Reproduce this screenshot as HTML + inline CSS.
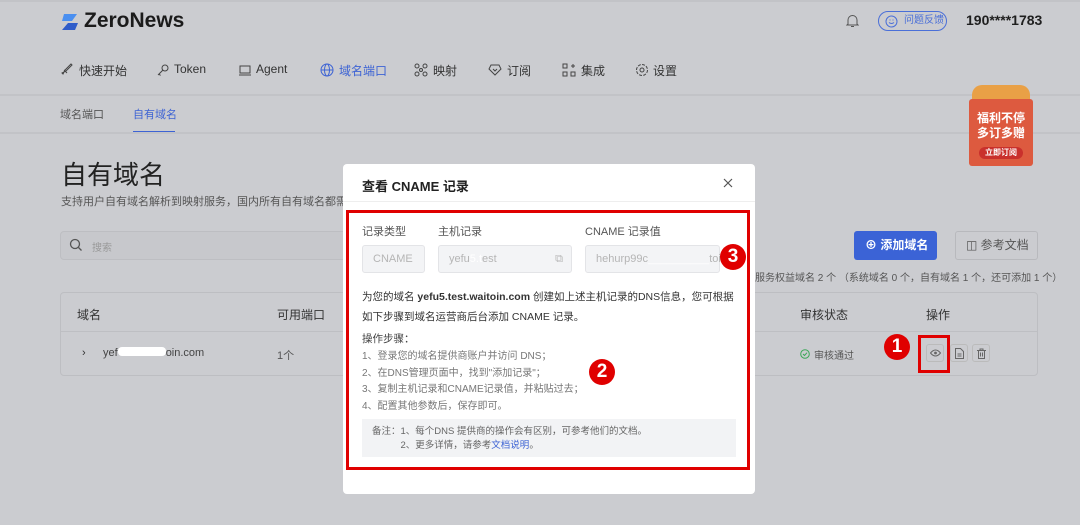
<!DOCTYPE html>
<html><head><meta charset="utf-8"><style>
*{margin:0;padding:0;box-sizing:border-box}
body{width:1080px;height:525px;overflow:hidden;background:#cbccd0;font-family:"Liberation Sans","Noto Sans CJK SC",sans-serif;position:relative;color:#1f1f1f}
.a{position:absolute;white-space:nowrap}
.hr{position:absolute;left:0;width:1080px;height:2px;background:#c2c3c7}
.in{position:absolute;background:#c7c8cc;border:1px solid #bdbec2;border-radius:4px}
.modal{position:absolute;left:343px;top:164px;width:412px;height:330px;background:#fff;border-radius:4px}
.box{position:absolute;background:#f3f4f6;border:1px solid #e3e4e7;border-radius:3px;color:#b5b5b5;font-size:11px;padding-left:10px;line-height:26px}
.num{position:absolute;width:26px;height:26px;border-radius:50%;background:#e00000;color:#fff;font-size:19px;font-weight:bold;text-align:center;line-height:26px}
.st{font-size:10px;color:#777}
.nav{position:absolute;top:62px;font-size:12px;color:#333}
.nav svg{position:absolute;left:0;top:1px}
</style></head><body>
<div class="hr" style="top:0;height:2px"></div>
<svg class="a" style="left:60px;top:12px" width="20" height="20" viewBox="0 0 20 20"><path d="M4 2h13l-5 7H2z" fill="#4a8ff0"/><path d="M8 11h10l-3 7H2z" fill="#2f5cc9"/></svg>
<div class="a" style="left:84px;top:9px;font-size:21px;font-weight:bold;color:#1b1b1b">ZeroNews</div>
<svg class="a" style="left:846px;top:14px" width="13" height="14" viewBox="0 0 13 14"><path d="M2 10V6a4.5 4.5 0 019 0v4l1 1H1zM5 12.5h3" stroke="#555" fill="none"/></svg>
<div class="a" style="left:878px;top:11px;width:69px;height:20px;border:1px solid #4a6fd8;border-radius:10px;color:#4a6fd8;font-size:10px;line-height:18px;padding-left:25px">问题反馈<svg style="position:absolute;left:6px;top:3px" width="13" height="13" viewBox="0 0 13 13"><circle cx="6.5" cy="6.5" r="5.5" stroke="#4a6fd8" fill="none"/><path d="M4 7.5q2.5 2 5 0M4.5 5h1M7.5 5h1" stroke="#4a6fd8" fill="none"/></svg></div>
<div class="a" style="left:966px;top:12px;font-size:14px;font-weight:bold">190****1783</div>

<div class="nav" style="left:60px;padding-left:19px"><svg width="14" height="14" viewBox="0 0 14 14"><path d="M3 11l2-4 6-6 1 1-6 6-4 2zM4 7l3 3" stroke="#444" fill="none"/></svg>快速开始</div>
<div class="nav" style="left:156px;padding-left:18px"><svg width="14" height="14" viewBox="0 0 14 14"><circle cx="9" cy="5" r="3" stroke="#444" fill="none"/><path d="M7 7l-5 5M3 11l1.5 1.5" stroke="#444" fill="none"/></svg>Token</div>
<div class="nav" style="left:238px;padding-left:18px"><svg width="14" height="14" viewBox="0 0 14 14"><rect x="2" y="3" width="10" height="7" stroke="#444" fill="none"/><path d="M1 12h12" stroke="#444"/></svg>Agent</div>
<div class="nav" style="left:320px;padding-left:19px;color:#3d63d4"><svg width="14" height="14" viewBox="0 0 14 14"><circle cx="7" cy="7" r="6" stroke="#3d63d4" fill="none"/><ellipse cx="7" cy="7" rx="2.5" ry="6" stroke="#3d63d4" fill="none"/><path d="M1 7h12" stroke="#3d63d4"/></svg>域名端口</div>
<div class="nav" style="left:414px;padding-left:19px"><svg width="14" height="14" viewBox="0 0 14 14"><g stroke="#444" fill="none"><circle cx="3" cy="3" r="2"/><circle cx="11" cy="3" r="2"/><circle cx="3" cy="11" r="2"/><circle cx="11" cy="11" r="2"/><circle cx="7" cy="7" r="1.5"/></g></svg>映射</div>
<div class="nav" style="left:488px;padding-left:19px"><svg width="14" height="14" viewBox="0 0 14 14"><path d="M3 2h8l2 4-6 6-6-6z M5 6l2 2 2-2" stroke="#444" fill="none"/></svg>订阅</div>
<div class="nav" style="left:562px;padding-left:19px"><svg width="14" height="14" viewBox="0 0 14 14"><g stroke="#444" fill="none"><rect x="1" y="1" width="4" height="4"/><rect x="1" y="9" width="4" height="4"/><rect x="9" y="9" width="4" height="4"/><path d="M11 1v4M9 3h4"/></g></svg>集成</div>
<div class="nav" style="left:635px;padding-left:18px"><svg width="14" height="14" viewBox="0 0 14 14"><circle cx="7" cy="7" r="5.5" stroke="#444" fill="none" stroke-dasharray="3 1.3"/><circle cx="7" cy="7" r="2" stroke="#444" fill="none"/></svg>设置</div>

<div class="hr" style="top:94px"></div>
<div class="a" style="left:60px;top:106px;font-size:11px;color:#555">域名端口</div>
<div class="a" style="left:133px;top:106px;font-size:11px;color:#3d63d4">自有域名</div>
<div class="a" style="left:133px;top:131px;width:42px;height:2px;background:#3d63d4"></div>
<div class="hr" style="top:132px"></div>
<div class="a" style="left:965px;top:85px;width:72px;height:82px;">
<div style="position:absolute;left:7px;top:0;width:58px;height:22px;background:#e9a046;border-radius:10px 10px 0 0"></div>
<div style="position:absolute;left:4px;top:14px;width:64px;height:67px;background:#dd5a3f;border-radius:3px;color:#fff;text-align:center;font-weight:bold;font-size:12px;line-height:15px;padding-top:12px">福利不停<br>多订多赠<div style="margin:6px auto 0;width:44px;height:12px;background:#c9302c;border-radius:6px;font-size:8px;line-height:12px">立即订阅</div></div>
</div>
<div class="a" style="left:61px;top:155px;font-size:26px;color:#222">自有域名</div>
<div class="a" style="left:61px;top:193px;font-size:11px;color:#555">支持用户自有域名解析到映射服务，国内所有自有域名都需</div>
<div class="in" style="left:60px;top:231px;width:300px;height:29px"></div>
<svg class="a" style="left:69px;top:238px" width="14" height="14" viewBox="0 0 14 14"><circle cx="6" cy="6" r="4.5" stroke="#555" fill="none" stroke-width="1.3"/><path d="M9.5 9.5l3 3" stroke="#555" stroke-width="1.3"/></svg>
<div class="a" style="left:92px;top:239px;font-size:10px;color:#999">搜索</div>
<div class="a" style="left:854px;top:231px;width:83px;height:29px;background:#3b63d6;border-radius:3px;color:#fff;font-size:12px;font-weight:bold;line-height:29px;padding-left:11px">⊕ 添加域名</div>
<div class="a" style="left:955px;top:231px;width:83px;height:29px;border:1px solid #b8b9bd;border-radius:3px;color:#555;font-size:12px;line-height:27px;padding-left:10px">◫ 参考文档</div>
<div class="a" style="left:755px;top:269px;font-size:10px;color:#555">服务权益域名 2 个 （系统域名 0 个，自有域名 1 个，还可添加 1 个）</div>
<div class="in" style="left:60px;top:292px;width:978px;height:84px;background:#cbccd0"></div>
<div class="a" style="left:61px;top:331px;width:976px;height:1px;background:#bebfc3"></div>
<div class="a" style="left:77px;top:306px;font-size:12px;color:#333">域名</div>
<div class="a" style="left:277px;top:306px;font-size:12px;color:#333">可用端口</div>
<div class="a" style="left:800px;top:306px;font-size:12px;color:#333">审核状态</div>
<div class="a" style="left:926px;top:306px;font-size:12px;color:#333">操作</div>
<div class="a" style="left:82px;top:347px;font-size:11px;color:#333">›</div>
<div class="a" style="left:103px;top:347px;font-size:11px;color:#444">yef<span style="display:inline-block;width:48px;height:9px;background:#fff;border-radius:4px"></span>oin.com</div>
<div class="a" style="left:277px;top:347px;font-size:11px;color:#555">1个</div>
<svg class="a" style="left:800px;top:349px" width="10" height="10" viewBox="0 0 10 10"><circle cx="5" cy="5" r="4.3" stroke="#3aa757" fill="none"/><path d="M3 5l1.5 1.5L7 3.7" stroke="#3aa757" fill="none"/></svg>
<div class="a" style="left:814px;top:347px;font-size:10px;color:#555">审核通过</div>
<div class="a" style="left:926px;top:344px;width:18px;height:18px;border:1px solid #bbb;border-radius:3px"><svg style="position:absolute;left:3px;top:4px" width="11" height="8" viewBox="0 0 11 8"><path d="M0.5 4Q5.5-2 10.5 4Q5.5 10 0.5 4z" stroke="#666" fill="none"/><circle cx="5.5" cy="4" r="1.4" fill="#666"/></svg></div>
<div class="a" style="left:950px;top:344px;width:18px;height:18px;border:1px solid #bbb;border-radius:3px"><svg style="position:absolute;left:4px;top:3px" width="9" height="11" viewBox="0 0 9 11"><path d="M0.5 0.5h5l3 3v7h-8z M2.5 6h4M2.5 8h4" stroke="#666" fill="none"/></svg></div>
<div class="a" style="left:972px;top:344px;width:18px;height:18px;border:1px solid #bbb;border-radius:3px"><svg style="position:absolute;left:4px;top:3px" width="9" height="11" viewBox="0 0 9 11"><path d="M0 2.5h9M3 2.5V1h3v1.5M1.5 2.5v8h6v-8M3.5 4.5v4M5.5 4.5v4" stroke="#666" fill="none"/></svg></div>
<div class="a" style="left:918px;top:335px;width:32px;height:38px;border:3px solid #e00000"></div>
<div class="num" style="left:884px;top:334px">1</div>

<div class="modal">
<div class="a" style="left:19px;top:12px;font-size:13px;font-weight:bold;color:#222">查看 CNAME 记录</div>
<svg class="a" style="left:380px;top:14px" width="10" height="10" viewBox="0 0 10 10"><path d="M1 1l8 8M9 1l-8 8" stroke="#555" stroke-width="1.2"/></svg>
<div class="a" style="left:0;top:37px;width:412px;height:1px;background:#eee"></div>
<div class="a" style="left:19px;top:59px;font-size:11px;color:#555">记录类型</div>
<div class="a" style="left:95px;top:59px;font-size:11px;color:#555">主机记录</div>
<div class="a" style="left:242px;top:59px;font-size:11px;color:#555">CNAME 记录值</div>
<div class="box" style="left:19px;top:81px;width:63px;height:28px">CNAME</div>
<div class="box" style="left:95px;top:81px;width:134px;height:28px">yefu<span style="color:#fff">5.t</span>est<span style="position:absolute;right:8px">⧉</span></div>
<div class="box" style="left:242px;top:81px;width:135px;height:28px">hehurp99c<span style="color:#fff">__________</span>toi</div>
<div class="a" style="left:19px;top:123px;font-size:10.5px;color:#333;line-height:20px">为您的域名 <b>yefu5.test.waitoin.com</b> 创建如上述主机记录的DNS信息，您可根据<br>如下步骤到域名运营商后台添加 CNAME 记录。</div>
<div class="a" style="left:19px;top:167px;font-size:10.5px;color:#444">操作步骤：</div>
<div class="a st" style="left:19px;top:185px;line-height:16.5px">1、登录您的域名提供商账户并访问 DNS；<br>2、在DNS管理页面中，找到"添加记录"；<br>3、复制主机记录和CNAME记录值，并粘贴过去；<br>4、配置其他参数后，保存即可。</div>
<div class="a" style="left:19px;top:255px;width:374px;height:38px;background:#f2f3f5;font-size:9.5px;color:#666;padding:6px 0 0 10px;line-height:14px">备注：1、每个DNS 提供商的操作会有区别，可参考他们的文档。<br>　　　2、更多详情，请参考<span style="color:#3d63d4">文档说明</span>。</div>
<div class="a" style="left:3px;top:46px;width:404px;height:260px;border:3px solid #e00000"></div>
<div class="num" style="left:377px;top:80px">3</div>
<div class="num" style="left:246px;top:195px">2</div>
</div>
</body></html>
